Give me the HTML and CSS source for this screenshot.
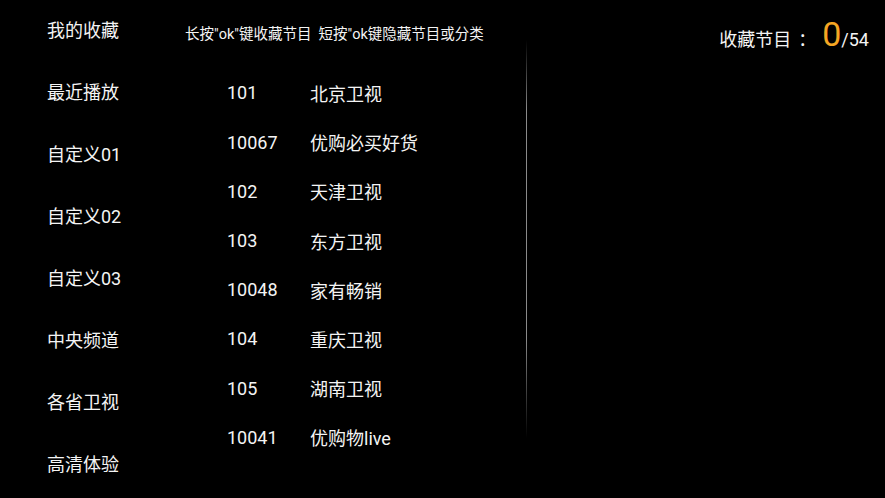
FILE: index.html
```html
<!DOCTYPE html>
<html lang="zh">
<head>
<meta charset="utf-8">
<link rel="stylesheet" href="styles.css">
</head>
<body>
<div class="page">
  <nav class="sidebar">
    <div class="menu-item">我的收藏</div>
    <div class="menu-item">最近播放</div>
    <div class="menu-item">自定义01</div>
    <div class="menu-item">自定义02</div>
    <div class="menu-item">自定义03</div>
    <div class="menu-item">中央频道</div>
    <div class="menu-item">各省卫视</div>
    <div class="menu-item">高清体验</div>
  </nav>
  <section class="main">
    <div class="hint">长按"ok"键收藏节目&nbsp;&nbsp;短按"ok键隐藏节目或分类</div>
    <div class="row"><span class="num">101</span><span class="name">北京卫视</span></div>
    <div class="row"><span class="num">10067</span><span class="name">优购必买好货</span></div>
    <div class="row"><span class="num">102</span><span class="name">天津卫视</span></div>
    <div class="row"><span class="num">103</span><span class="name">东方卫视</span></div>
    <div class="row"><span class="num">10048</span><span class="name">家有畅销</span></div>
    <div class="row"><span class="num">104</span><span class="name">重庆卫视</span></div>
    <div class="row"><span class="num">105</span><span class="name">湖南卫视</span></div>
    <div class="row"><span class="num">10041</span><span class="name">优购物live</span></div>
  </section>
  <div class="divider"></div>
  <aside class="right">
    <div class="counter"><span class="label">收藏节目</span><span class="colon">：</span><span class="count">0</span><span class="total">/54</span></div>
  </aside>
</div>
</body>
</html>
```
FILE: styles.css
```css
html, body {
  margin: 0;
  padding: 0;
  background: #000;
}
body {
  width: 885px;
  height: 498px;
  overflow: hidden;
  color: #f4f4f4;
  font-family: Roboto, "Noto Sans CJK SC", sans-serif;
}
.page {
  display: flex;
  height: 498px;
}
.sidebar {
  width: 185px;
  flex: none;
  box-sizing: border-box;
  padding-left: 47px;
}
.menu-item {
  height: 62px;
  line-height: 62px;
  font-size: 18px;
  white-space: nowrap;
}
.main {
  width: 341px;
  flex: none;
}
.hint {
  height: 68.4px;
  line-height: 70px;
  font-size: 14.5px;
  white-space: nowrap;
}
.row {
  height: 49.2px;
  display: flex;
  align-items: center;
  padding-left: 42px;
  font-size: 18px;
}
.num {
  width: 83px;
  flex: none;
}
.divider {
  width: 1px;
  flex: none;
  background: linear-gradient(to bottom, rgba(140,140,140,0) 8%, #8a8a8a 22%, #8a8a8a 68%, rgba(140,140,140,0) 88%);
}
.right {
  flex: 1;
  display: flex;
  justify-content: flex-end;
  align-items: flex-start;
  padding-right: 16px;
  padding-top: 17px;
}
.counter {
  white-space: nowrap;
  line-height: 1;
}
.label {
  font-size: 18px;
}
.colon {
  font-size: 18px;
  margin-left: 7px;
  margin-right: 6px;
}
.count {
  font-size: 34px;
  color: #f5a623;
}
.total {
  font-size: 18px;
}
```
